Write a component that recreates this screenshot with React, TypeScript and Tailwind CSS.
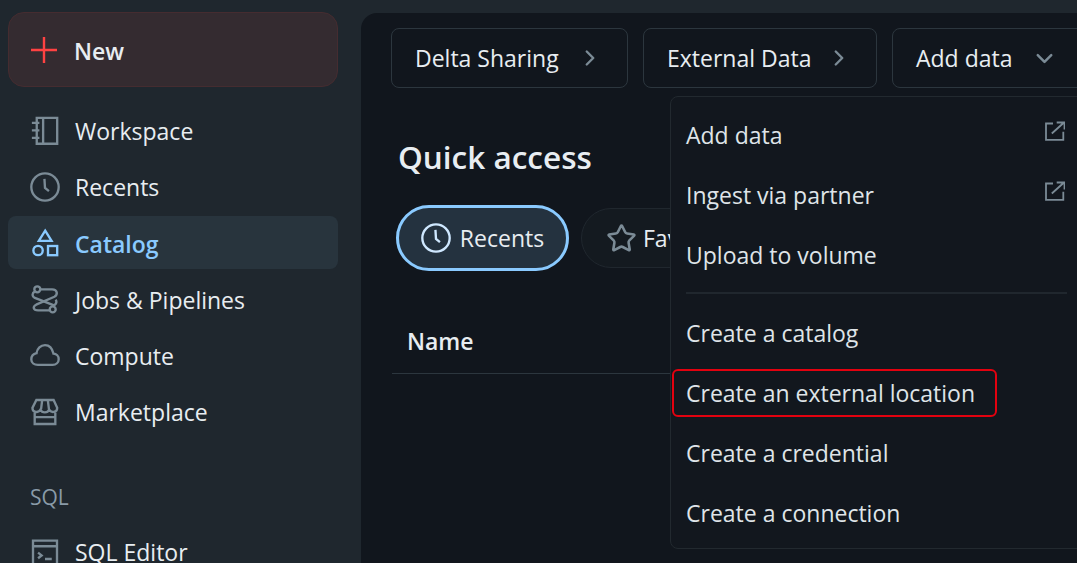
import { ChevronDown, ChevronRight, Star } from 'lucide-react'
import type { ReactNode } from 'react'

const Svg = ({ children, className }: { children: ReactNode; className: string }) => (
  <svg viewBox="0 0 16 16" fill="none" stroke="currentColor" strokeWidth="1.25" className={className}>
    {children}
  </svg>
)

const WorkspaceIcon = () => (
  <Svg className="h-[30px] w-[30px] text-[#7b8b96]">
    <path d="M3.600 1h10.900v13.800H3.600zM7 1v13.800M1 3.700h4M1 7.700h4M1 11.700h4" />
  </Svg>
)

const ClockIcon = ({ className }: { className: string }) => (
  <Svg className={className}>
    <circle cx="8" cy="8" r="7.300" />
    <path d="M7.700 3.700 8 8.500l2.100 1.700" />
  </Svg>
)

const CatalogIcon = () => (
  <Svg className="h-[30px] w-[30px] text-[#8acaff]">
    <path d="M8.100 1.400 11.500 6.900H4.700z" />
    <circle cx="4.300" cy="12" r="2.500" />
    <rect x="9.600" y="9.600" width="4.900" height="4.900" />
  </Svg>
)

const JobsIcon = () => (
  <Svg className="h-[30px] w-[30px] text-[#7b8b96]">
    <circle cx="3.900" cy="2.300" r="1.600" />
    <circle cx="12.100" cy="13" r="1.600" />
    <path d="M5.500 2.300h6.300c2.900 0 3.200 2.900 1.200 4L3.300 10.500c-2 1-1.700 3 1 3h6.200" />
    <path d="M2.700 3.400C1 4.200.9 6 2.600 6.900l10.200 4c1.300-.9 1.600-2 .9-3.100" />
  </Svg>
)

const CloudIcon = () => (
  <Svg className="h-[30px] w-[30px] text-[#7b8b96]">
    <path d="M4.200 12.700h7.900c1.800 0 3.200-1.300 3.200-3 0-1.600-1.200-2.900-2.800-3C11.900 4 10.200 2.200 8 2.200 5.700 2.200 3.800 4 3.500 6.500 1.900 6.900.7 8.200.7 9.800c0 1.700 1.500 2.900 3.500 2.900z" />
  </Svg>
)

const MarketIcon = () => (
  <Svg className="h-[30px] w-[30px] text-[#7b8b96]">
    <path d="M2.500 8.400v6h11v-6M2.500 10.700h11M3.400 1.600h9.200l1.900 4.200c0 2.500-3.300 2.900-4.300.9-.8 2-3.800 2-4.600 0-1 2-4.300 1.600-4.300-.9zM6.500 1.600l-.6 4.900M9.500 1.600l.6 4.900" />
  </Svg>
)

const EditorIcon = () => (
  <Svg className="h-[30px] w-[30px] text-[#7b8b96]">
    <path d="M1.600 1.400h12.800v13.200H1.600zM1.600 4.400h12.800M4.300 7.800l1.900 1.500-1.900 1.500M8 11.200h3.600" />
  </Svg>
)

const OpenIcon = () => (
  <svg viewBox="0 0 20 20" fill="none" stroke="currentColor" strokeWidth="1.800" className="absolute left-[359px] top-[16px] h-5 w-5 text-[#7b8b96]">
    <path d="M8 2.500H1v16.300h17.300V10.700M6.800 12.500 19 1.500M11.700 1.500h7.800v7" />
  </svg>
)

const navItems = [
  { label: 'Workspace', icon: <WorkspaceIcon /> },
  { label: 'Recents', icon: <ClockIcon className="h-[30px] w-[30px] text-[#7b8b96]" /> },
]

const navItemsBelow = [
  { label: 'Jobs & Pipelines', icon: <JobsIcon /> },
  { label: 'Compute', icon: <CloudIcon /> },
  { label: 'Marketplace', icon: <MarketIcon /> },
]

const menuTop = [
  { label: 'Add data', external: true },
  { label: 'Ingest via partner', external: true },
  { label: 'Upload to volume', external: false },
]

const Crumb = ({ label, width, down }: { label: string; width: string; down?: boolean }) => (
  <button type="button" className={`flex h-[60px] shrink-0 items-center rounded-lg border border-[#2c363e] pl-[23px] pr-[24px] text-[23px] text-[#e8edf1] ${width} ${down ? 'justify-start' : 'justify-between'}`}>
    <span>{label}</span>
    {down ? <ChevronDown size={27} strokeWidth={2.2} className="ml-[18px] text-[#7b8b96]" /> : <ChevronRight size={26} strokeWidth={2.2} className="text-[#7b8b96]" />}
  </button>
)

export default function App() {
  return (
    <div className="flex h-[563px] w-[1077px] overflow-hidden bg-[#1f272e] font-['Open_Sans','Noto_Sans',sans-serif] text-[#e8edf1]">
      <aside className="w-[361px] shrink-0 pl-2 pr-[23px] pt-3">
        <button type="button" className="flex h-[75px] w-full items-center rounded-[16px] border border-[#452c30] bg-[#342b30] pl-[21px] text-[23px] font-semibold">
          <svg viewBox="0 0 28 28" className="mr-[16px] h-[28px] w-[28px] text-[#ff4242]" fill="none" stroke="currentColor" strokeWidth="2.400">
            <path d="M14 1v26M1 14h26" />
          </svg>
          <span className="pt-1">New</span>
        </button>

        <nav className="mt-4">
          {navItems.map((item) => (
            <div key={item.label} className="flex h-[56px] items-center pl-[22px] text-[23px]">
              <span className="mr-[15px] flex w-[30px] justify-center">{item.icon}</span>
              {item.label}
            </div>
          ))}
          <div className="mt-px flex h-[53px] items-center rounded-lg bg-[#28343d] pl-[22px] text-[23px] font-semibold text-[#8acaff]">
            <span className="mr-[15px] flex w-[30px] justify-center"><CatalogIcon /></span>
            <span className="pt-[3px]">Catalog</span>
          </div>
          <div className="mt-[3px]">
            {navItemsBelow.map((item) => (
              <div key={item.label} className="flex h-[56px] items-center pl-[22px] text-[23px]">
                <span className="mr-[15px] flex w-[30px] justify-center">{item.icon}</span>
                {item.label}
              </div>
            ))}
          </div>
        </nav>

        <div className="mt-[42px] pl-[22px] text-[21px] text-[#8a9ba8]">SQL</div>
        <div className="mt-[24px] flex h-[30px] items-center pl-[22px] text-[23px]">
          <span className="mr-[15px] flex w-[30px] justify-center"><EditorIcon /></span>
          SQL Editor
        </div>
      </aside>

      <main className="relative mt-[13px] min-w-0 flex-1 rounded-tl-[16px] bg-[#11161d] pl-[30px] pt-[15px]">
        <div className="flex gap-[15px]">
          <Crumb label="Delta Sharing" width="w-[237px]" />
          <Crumb label="External Data" width="w-[234px]" />
          <Crumb label="Add data" width="w-[200px]" down />
        </div>

        <h1 className="mt-[47px] pl-[7px] text-[31.5px] font-semibold leading-[44px]">Quick access</h1>

        <div className="mt-[26px] flex items-center gap-3 pl-[5px]">
          <button type="button" className="flex h-[66px] w-[173px] items-center justify-center gap-[9px] rounded-full border-[3px] border-[#8acaff] bg-[#24323f] text-[23px]">
            <ClockIcon className="h-[30px] w-[30px] text-[#cfe8ff]" />
            Recents
          </button>
          <button type="button" className="flex h-[60px] w-[200px] items-center gap-[6px] rounded-full border border-[#20272e] bg-[#141a20] pl-[24px] text-[23px]">
            <Star size={31} strokeWidth={2} className="text-[#7b8b96]" />
            Favorites
          </button>
        </div>

        <div className="ml-px mt-[45px] h-[58px] w-[500px] border-b border-[#2c363e] pl-[15px] pt-[8px] text-[23px] font-semibold">Name</div>

        {/* dropdown for Add data */}
        <div className="absolute left-[309px] top-[83px] h-[453px] w-[420px] rounded-lg border border-[#22292f] bg-[#12171e] pl-[15px] pr-[10px] text-[23px] text-[#dfe4e8]">
          <div className="pt-[8px]">
            {menuTop.map((item) => (
              <div key={item.label} className="relative flex h-[60px] items-center">
                {item.label}
                {item.external ? <OpenIcon /> : null}
              </div>
            ))}
          </div>
          <div className="mt-[7px] h-[2px] w-[381px] bg-[#20272e]" />
          <div className="pt-[9px]">
            <div className="flex h-[60px] items-center">Create a catalog</div>
            <div className="relative flex h-[60px] items-center">
              Create an external location
              <div className="absolute left-[-14px] top-[6px] h-[48px] w-[325px] rounded-md border-2 border-[#e3010f]" />
            </div>
            <div className="flex h-[60px] items-center">Create a credential</div>
            <div className="flex h-[60px] items-center">Create a connection</div>
          </div>
        </div>
      </main>
    </div>
  )
}
